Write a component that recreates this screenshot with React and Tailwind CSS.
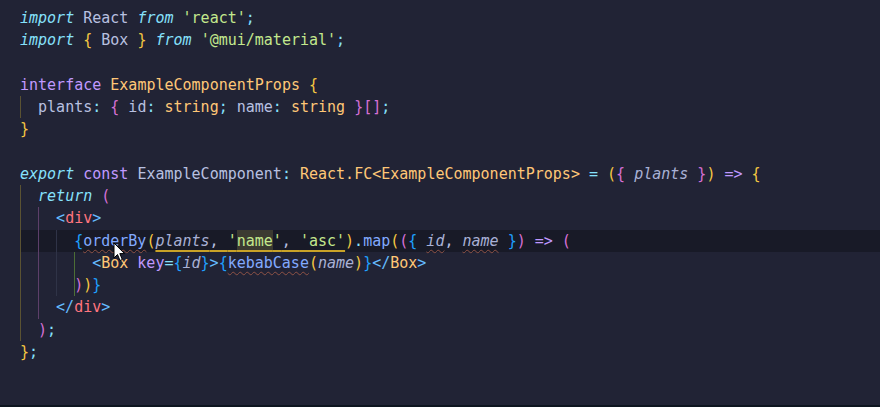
import React from 'react';

const K = 'text-[#86e1fc] italic';
const P = 'text-[#c099ff]';
const T = 'text-[#b8c0e0]';
const V = 'text-[#a9b1d6] italic';
const S = 'text-[#c3e88d]';
const Y = 'text-[#ffc777]';
const G = 'text-[#f5c842]';
const O = 'text-[#d670d6]';
const B = 'text-[#1fa0ff]';
const F = 'text-[#82aaff]';
const C = 'text-[#86e1fc]';
const J = 'text-[#65bcff]';
const R = 'text-[#ff757f]';
const WAVY = 'underline decoration-wavy decoration-[#8f5245] decoration-1 underline-offset-[3px]';

const GOLD = 'shadow-[inset_1px_0_0_#5a5232]';
const PURP = 'shadow-[inset_1px_0_0_#5d3f6a]';
const DIM = 'shadow-[inset_1px_0_0_#2f3347]';
const GREEN = 'shadow-[inset_1px_0_0_#4c6e36]';

const lines = [
  { g: [], t: [['import', K], [' React ', T], ['from', K], [' ', T], ["'react'", S], [';', C]] },
  { g: [], t: [['import', K], [' ', T], ['{', G], [' Box ', T], ['}', G], [' ', T], ['from', K], [' ', T], ["'@mui/material'", S], [';', C]] },
  { g: [], t: [] },
  { g: [], t: [['interface', P], [' ', T], ['ExampleComponentProps', Y], [' ', T], ['{', G]] },
  { g: [GOLD], t: [['plants', T], [':', C], [' ', T], ['{', O], [' id', T], [':', C], [' ', T], ['string', Y], [';', C], [' name', T], [':', C], [' ', T], ['string', Y], [' ', T], ['}', O], ['[]', O], [';', C]] },
  { g: [], t: [['}', G]] },
  { g: [], t: [] },
  { g: [], t: [['export', K], [' ', T], ['const', P], [' ExampleComponent', T], [':', C], [' ', T], ['React.FC<ExampleComponentProps>', Y], [' ', T], ['=', C], [' ', T], ['(', G], ['{', O], [' ', T], ['plants', V], [' ', T], ['}', O], [')', G], [' ', T], ['=>', P], [' ', T], ['{', G]] },
  { g: [GOLD], t: [['return', K], [' ', T], ['(', O]] },
  { g: [GOLD, PURP], t: [['<', J], ['div', R], ['>', J]] },
  { g: [GOLD, PURP, DIM], band: true, special: true },
  { g: [GOLD, PURP, DIM, GREEN], t: [['<', J], ['Box', Y], [' ', T], ['key', P], ['=', C], ['{', B], ['id', V], ['}', B], ['>', J], ['{', B], ['kebabCase', F + ' ' + WAVY], ['(', G], ['name', V], [')', G], ['}', B], ['</', J], ['Box', Y], ['>', J]] },
  { g: [GOLD, PURP, DIM], lead: GREEN, t: [[')', O], [')', G], ['}', B]] },
  { g: [GOLD, PURP], t: [['</', J], ['div', R], ['>', J]] },
  { g: [GOLD], t: [[')', O], [';', C]] },
  { g: [], t: [['}', G], [';', C]] },
];

function Tokens({ t }) {
  return t.map(([text, cls], i) => (
    <span key={i} className={cls}>{text}</span>
  ));
}

function Special() {
  return (
    <span className="whitespace-pre">
      <span className={B}>{'{'}</span>
      <span className={F + ' ' + WAVY}>orderBy</span>
      <span className={G}>(</span>
      <span className="underline decoration-solid decoration-[#c9a227] decoration-[1.5px] underline-offset-[4px]">
        <span className={V}>plants</span>
        <span className={T}>, </span>
        <span className={S}>'</span>
        <span className={S + ' bg-[#3b3a31] py-[2px]'}>name</span>
        <span className={S}>'</span>
        <span className={T}>, </span>
        <span className={S}>'asc'</span>
      </span>
      <span className={G}>)</span>
      <span className={C}>.</span>
      <span className={F}>map</span>
      <span className={G}>(</span>
      <span className={O}>(</span>
      <span className={B}>{'{'}</span>
      <span className={T}> </span>
      <span className={V + ' ' + WAVY}>id</span>
      <span className={T}>, </span>
      <span className={V + ' ' + WAVY}>name</span>
      <span className={T}> </span>
      <span className={B}>{'}'}</span>
      <span className={O}>)</span>
      <span className={T}> </span>
      <span className={P}>=&gt;</span>
      <span className={T}> </span>
      <span className={O}>(</span>
    </span>
  );
}

function Cursor() {
  return (
    <svg className="absolute left-[113px] top-[242px]" width="13" height="20" viewBox="0 0 13 20">
      <path
        d="M1 1 L1 16 L4.5 12.5 L7 18.5 L9.3 17.5 L6.8 11.6 L11.5 11.6 Z"
        fill="#ffffff"
        stroke="#000000"
        strokeWidth="1"
        strokeLinejoin="round"
      />
    </svg>
  );
}

export default function App() {
  return (
    <div className="relative w-[880px] h-[407px] overflow-hidden bg-[#212335] flex flex-col font-['DejaVu_Sans_Mono',monospace] text-[15px]">
      <div className="flex-1 pt-[7px] pl-[20px]">
        {lines.map((ln, i) => (
          <div
            key={i}
            className={'flex h-[22.27px] leading-[22.27px] whitespace-pre ' + (ln.band ? 'bg-[#181a27]' : '')}
          >
            {ln.g.map((cls, j) => (
              <div key={j} className={'w-[2ch] shrink-0 h-full ' + cls} />
            ))}
            <div className={'h-full ' + (ln.lead || '')}>
              {ln.special ? <Special /> : <Tokens t={ln.t} />}
            </div>
          </div>
        ))}
      </div>
      <div className="h-[2px] bg-[#0e1520]" />
      <Cursor />
    </div>
  );
}
